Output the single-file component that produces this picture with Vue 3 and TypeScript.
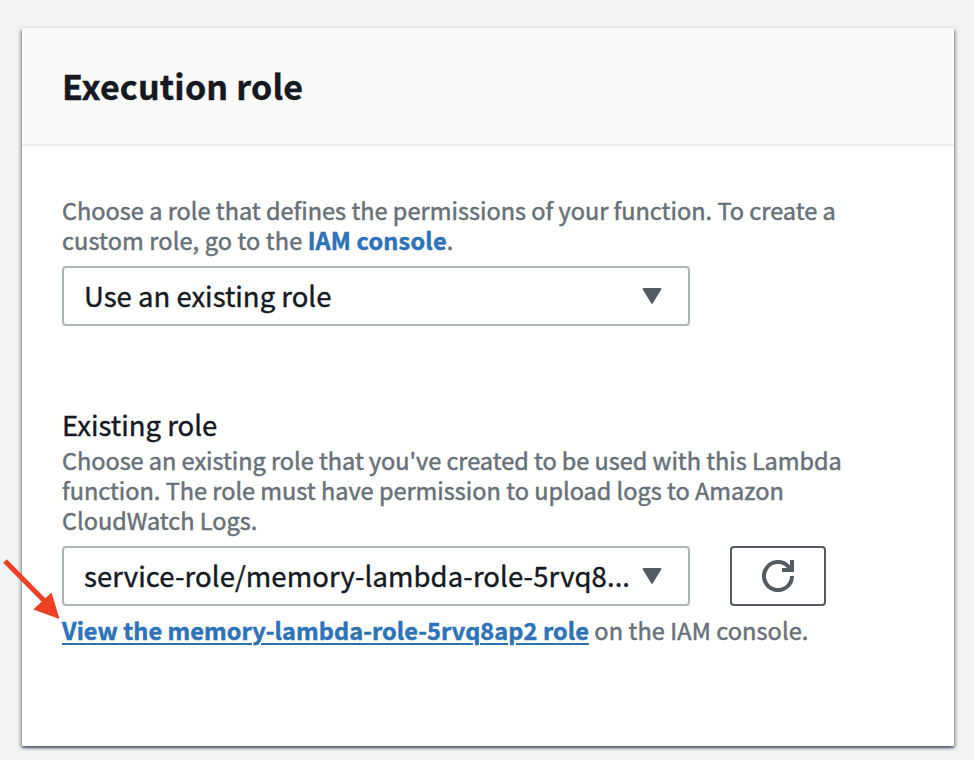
<script setup lang="ts">
import { ref } from 'vue'

interface Line {
  text: string
  cls: string
}

const selectedMode = ref<string>('Use an existing role')
const selectedRole = ref<string>('service-role/memory-lambda-role-5rvq8...')

const roleHint: Line[] = [
  { text: "Choose an existing role that you've created to be used with this Lambda", cls: 'h1' },
  { text: 'function. The role must have permission to upload logs to Amazon', cls: 'h2' },
  { text: 'CloudWatch Logs.', cls: 'h3' },
]
</script>

<template>
  <main class="page">
    <section class="card">
      <header class="card-header">
        <h2 class="title">Execution role</h2>
      </header>
      <div class="card-body">
        <p class="hint">
          <span class="line c1">Choose a role that defines the permissions of your function. To create a</span>
          <span class="line"><span class="c2">custom role, go to the </span><a class="link iam">IAM console</a>.</span>
        </p>
        <button class="select" type="button">
          <span class="value mode">{{ selectedMode }}</span>
          <svg class="caret" width="20" height="16" viewBox="0 0 20 16"><path d="M1.6 1h16.8L10 14.8z" /></svg>
        </button>

        <div class="label">Existing role</div>
        <p class="hint">
          <span v-for="line in roleHint" :key="line.text" class="line" :class="line.cls">{{ line.text }}</span>
        </p>
        <div class="row">
          <button class="select" type="button">
            <span class="value role">{{ selectedRole }}</span>
            <svg class="caret" width="20" height="16" viewBox="0 0 20 16"><path d="M1.6 1h16.8L10 14.8z" /></svg>
          </button>
          <button class="refresh" type="button" aria-label="Refresh">
            <svg width="32" height="32" viewBox="0 0 32 32">
              <path d="M30 16A14 14 0 1 1 26.5 6.8L30 10" />
              <path d="M30 0v10H20" />
            </svg>
          </button>
        </div>
        <p class="hint footer"><a class="link view">View the memory-lambda-role-5rvq8ap2 role</a><span class="after"> on the IAM console.</span></p>
      </div>
    </section>
    <svg class="arrow" width="64" height="64" viewBox="0 0 64 64">
      <path class="shaft" d="M5 5L45 45.500" />
      <path class="head" d="M59.500 63L33.200 53.500L51.500 36.500z" />
    </svg>
  </main>
</template>

<style>
html,
body {
  margin: 0;
  background: #f2f3f3;
}
</style>

<style scoped>
.page {
  position: relative;
  box-sizing: border-box;
  width: 974px;
  height: 760px;
  padding: 28px 20px 14px 22px;
  overflow: hidden;
  background: #f2f3f3;
  font-family: "Noto Sans CJK JP", "Noto Sans", sans-serif;
}
.card {
  box-sizing: border-box;
  width: 932px;
  height: 718px;
  background: #fff;
  box-shadow: 0 2px 2px 0 rgba(0, 28, 36, 0.3), 2px 2px 3px 0 rgba(0, 7, 22, 0.3), -2px 2px 3px 0 rgba(0, 7, 22, 0.3), 0 -2px 0 0 #eaeded;
}
.card-header {
  box-sizing: border-box;
  height: 118px;
  padding: 36px 40px 0;
  background: #fafafa;
  border-bottom: 2px solid #eaeded;
}
.title {
  margin: 0;
  color: #16191f;
  font-size: 34px;
  font-weight: 700;
  letter-spacing: 0.2px;
  line-height: 44px;
  -webkit-text-stroke: 0.4px #16191f;
}
.card-body {
  padding: 49px 40px 0;
}
.hint {
  margin: 0;
  color: #687078;
  font-size: 23.500px;
  line-height: 30px;
  white-space: nowrap;
  -webkit-text-stroke: 0.5px currentColor;
}
.line {
  display: block;
  height: 30px;
}
.c1 {
  letter-spacing: 0.015px;
}
.c2 {
  letter-spacing: 0.120px;
  white-space: pre;
}
.h1 {
  letter-spacing: -0.025px;
}
.link {
  color: #2e73b8;
  font-weight: 700;
}
.iam {
  letter-spacing: 0.180px;
}
.view {
  letter-spacing: 0.085px;
  text-decoration: underline;
  text-decoration-thickness: 2px;
  text-underline-offset: 3px;
}
.after {
  letter-spacing: 0.1px;
}
.select {
  display: flex;
  align-items: center;
  justify-content: space-between;
  box-sizing: border-box;
  width: 628px;
  height: 60px;
  margin: 11px 0 0;
  padding: 0 26px 0 20px;
  border: 2px solid #aab7b8;
  border-radius: 4px;
  background: #fff;
  color: #16191f;
  font-family: inherit;
  font-size: 27.500px;
  white-space: nowrap;
  -webkit-text-stroke: 0.4px #16191f;
}
.value {
  padding-bottom: 3px;
}
.role {
  letter-spacing: 0.080px;
}
.caret {
  flex: none;
  fill: #545b64;
  stroke: #545b64;
  stroke-width: 2;
  stroke-linejoin: round;
}
.label {
  margin-top: 79px;
  height: 40px;
  color: #16191f;
  font-size: 27.500px;
  line-height: 39px;
  -webkit-text-stroke: 0.4px #16191f;
}
.row {
  display: flex;
  gap: 40px;
  margin-top: 11px;
}
.row .select {
  margin: 0;
}
.refresh {
  display: flex;
  align-items: center;
  justify-content: center;
  box-sizing: border-box;
  width: 96px;
  height: 60px;
  padding: 0;
  border: 2px solid #545b64;
  border-radius: 4px;
  background: #fff;
}
.refresh svg {
  fill: none;
  stroke: #545b64;
  stroke-width: 4;
}
.footer {
  margin-top: 9px;
  white-space: pre;
}
.arrow {
  position: absolute;
  left: 0;
  top: 556px;
}
.shaft {
  fill: none;
  stroke: #ee4023;
  stroke-width: 5;
}
.head {
  fill: #ee4023;
}
</style>
